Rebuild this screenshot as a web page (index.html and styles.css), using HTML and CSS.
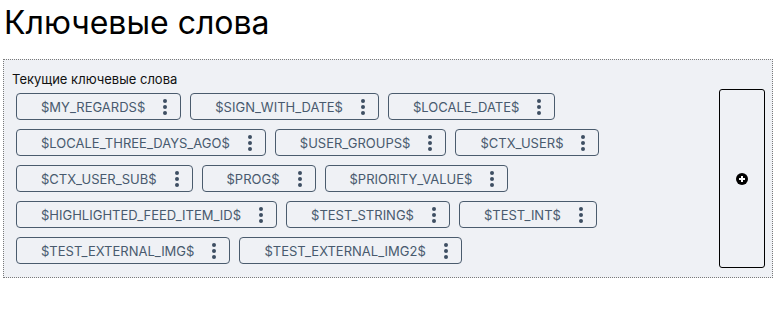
FILE: index.html
```html
<!DOCTYPE html>
<html lang="ru">
<head>
    <meta charset="UTF-8">
    <title>Ключевые слова</title>
    <link rel="stylesheet" href="styles.css">
</head>
<body>
    <h1>Ключевые слова</h1>

    <div class="keywords-box">
        <div class="keywords-label">Текущие ключевые слова</div>
        <div class="keywords-row">
            <div class="chips">
                <div class="chip"><span class="chip-text">$MY_REGARDS$</span><span class="kebab"><i></i><i></i><i></i></span></div>
                <div class="chip"><span class="chip-text">$SIGN_WITH_DATE$</span><span class="kebab"><i></i><i></i><i></i></span></div>
                <div class="chip"><span class="chip-text">$LOCALE_DATE$</span><span class="kebab"><i></i><i></i><i></i></span></div>
                <div class="chip"><span class="chip-text">$LOCALE_THREE_DAYS_AGO$</span><span class="kebab"><i></i><i></i><i></i></span></div>
                <div class="chip"><span class="chip-text">$USER_GROUPS$</span><span class="kebab"><i></i><i></i><i></i></span></div>
                <div class="chip"><span class="chip-text">$CTX_USER$</span><span class="kebab"><i></i><i></i><i></i></span></div>
                <div class="chip"><span class="chip-text">$CTX_USER_SUB$</span><span class="kebab"><i></i><i></i><i></i></span></div>
                <div class="chip"><span class="chip-text">$PROG$</span><span class="kebab"><i></i><i></i><i></i></span></div>
                <div class="chip"><span class="chip-text">$PRIORITY_VALUE$</span><span class="kebab"><i></i><i></i><i></i></span></div>
                <div class="chip"><span class="chip-text">$HIGHLIGHTED_FEED_ITEM_ID$</span><span class="kebab"><i></i><i></i><i></i></span></div>
                <div class="chip"><span class="chip-text">$TEST_STRING$</span><span class="kebab"><i></i><i></i><i></i></span></div>
                <div class="chip"><span class="chip-text">$TEST_INT$</span><span class="kebab"><i></i><i></i><i></i></span></div>
                <div class="chip"><span class="chip-text">$TEST_EXTERNAL_IMG$</span><span class="kebab"><i></i><i></i><i></i></span></div>
                <div class="chip"><span class="chip-text">$TEST_EXTERNAL_IMG2$</span><span class="kebab"><i></i><i></i><i></i></span></div>
            </div>
            <button class="add-btn" type="button">
                <svg width="12" height="12" viewBox="0 0 12 12">
                    <circle cx="6" cy="6" r="6" fill="#000"/>
                    <path d="M6 3v6M3 6h6" stroke="#fff" stroke-width="2"/>
                </svg>
            </button>
        </div>
    </div>
</body>
</html>
```

FILE: styles.css
```css
* {
    margin: 0;
    padding: 0;
    box-sizing: border-box;
    font-family: 'Inter', sans-serif;
}

body {
    background: #fff;
    padding: 0 3px;
}

h1 {
    font-size: 32px;
    font-weight: 400;
    color: #000;
    line-height: 46px;
    margin-bottom: 13px;
    padding-left: 1px;
}

.keywords-box {
    border: 1px dotted #7a7a7a;
    background: #eff1f5;
    padding: 10px 7px 9px 8px;
}

.keywords-label {
    font-size: 13px;
    color: #111;
    line-height: 19px;
}

.keywords-row {
    display: flex;
    align-items: stretch;
}

.chips {
    flex: 1;
    display: flex;
    flex-wrap: wrap;
    align-content: flex-start;
    gap: 9px 9px;
    padding: 4px 4px 4px 4px;
}

.chip {
    display: flex;
    align-items: center;
    height: 27px;
    border: 1px solid #4a5b6d;
    border-radius: 4px;
    padding: 0 3px 0 24px;
    color: #485a6e;
    font-size: 13px;
}

.kebab {
    width: 24px;
    margin-left: 8px;
    display: flex;
    flex-direction: column;
    align-items: center;
    gap: 2px;
}

.kebab i {
    width: 4px;
    height: 4px;
    border-radius: 50%;
    background: #3e4f62;
}

.add-btn {
    width: 46px;
    border: 1px solid #000;
    border-radius: 3px;
    background: #eff1f5;
    display: flex;
    align-items: center;
    justify-content: center;
    cursor: pointer;
}
```
